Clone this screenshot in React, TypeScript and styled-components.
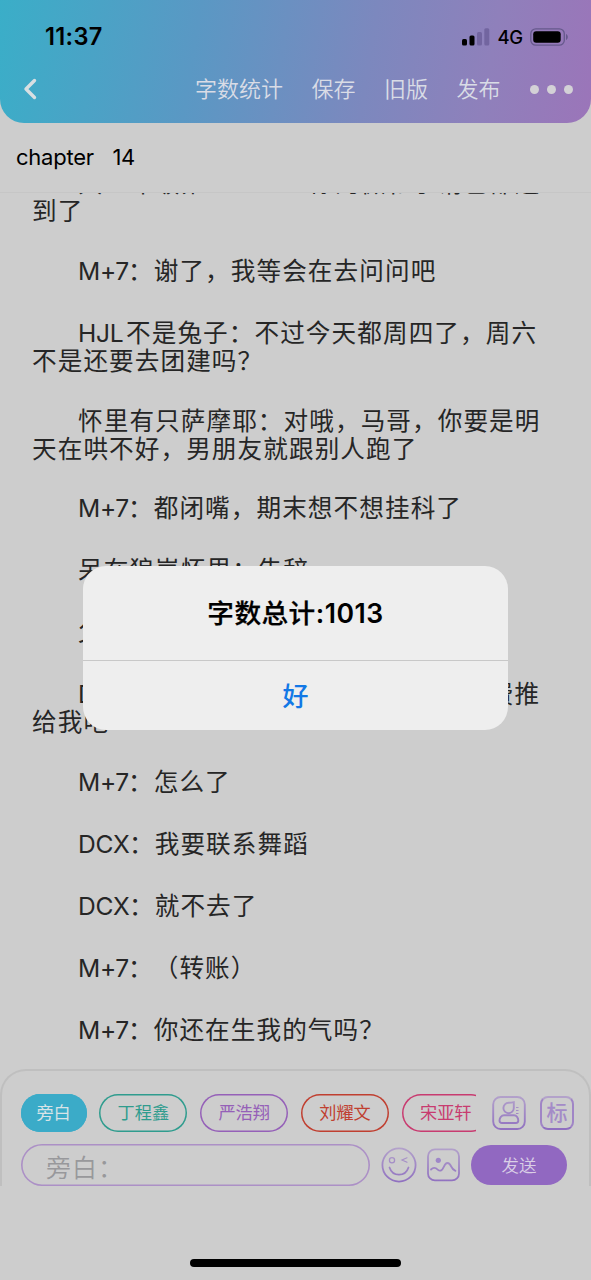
import React from "react";
import styled, { createGlobalStyle, css } from "styled-components";

const Global = createGlobalStyle`
  * { box-sizing: border-box; }
  html, body { margin: 0; padding: 0; background: #cdcdcd; }
  body { font-family: Inter, "Noto Sans CJK SC", sans-serif; color: #000; }
  button { font: inherit; background: none; border: 0; padding: 0; margin: 0; }
`;

const Screen = styled.div`
  position: relative;
  width: 591px;
  height: 1280px;
  overflow: hidden;
  display: flex;
  flex-direction: column;
  background: #cdcdcd;
`;

const Header = styled.header`
  flex: none;
  height: 123px;
  border-radius: 0 0 24px 24px;
  background: linear-gradient(99deg, #3aaec8 0%, #5a98c4 33%, #7c88be 62%, #8f80bb 82%, #9b75b9 100%);
`;

const StatusBar = styled.div`
  height: 62px;
  padding: 11px 22px 0 45px;
  display: flex;
  align-items: center;
`;

const Clock = styled.span`
  flex: 1;
  font-size: 23.6px;
  font-weight: 600;
  letter-spacing: 0.3px;
`;

const Network = styled.span`
  margin: 0 7px 0 7px;
  font-size: 18.5px;
  font-weight: 500;
  letter-spacing: -0.2px;
`;

const Nav = styled.nav`
  height: 54px;
  padding: 0 18px 0 22px;
  display: flex;
  align-items: center;
  gap: 28.5px;
`;

const BackButton = styled.button`
  display: flex;
  margin-right: auto;
`;

const NavItem = styled.button`
  color: #d9dce6;
  font-size: 22px;
  font-weight: 350;
  line-height: 30px;
`;

const Dots = styled.div`
  display: flex;
  gap: 8px;
  margin-left: 1px;
  i {
    width: 9px;
    height: 9px;
    border-radius: 50%;
    background: #d3d1d6;
  }
`;

const ChapterTitle = styled.h1`
  flex: none;
  margin: 0;
  height: 69px;
  padding-left: 16px;
  font-size: 22px;
  font-weight: 400;
  line-height: 69px;
  white-space: pre;
  letter-spacing: -0.25px;
  word-spacing: 3.4px;
`;

const Story = styled.main`
  flex: none;
  height: 877px;
  border-top: 1px solid #c6c6c6;
  padding-left: 32px;
  overflow: hidden;
  color: #262626;
`;

const Scrolled = styled.div`
  margin-top: -24px;
`;

const Paragraph = styled.p<{ $double?: boolean }>`
  margin: 0;
  height: ${(p) => (p.$double ? 87.8 : 62)}px;
  font-size: 24.6px;
  letter-spacing: 1.1px;
  line-height: 28px;
  white-space: nowrap;
  font-weight: 400;
  text-spacing-trim: space-all;
`;

const FirstLine = styled.span`
  display: flex;
  height: 28px;
  padding-left: 46px;
`;

const NextLine = styled.span`
  display: block;
  height: 28px;
`;

const Latin = styled.span<{ $width: number }>`
  width: ${(p) => p.$width}px;
  letter-spacing: -0.3px;
`;

const Composer = styled.section`
  flex: none;
  height: 117px;
  padding: 23px 14px 0 18.6px;
  border: solid #bfbfbf;
  border-width: 2px 2px 0;
  border-radius: 26px 26px 0 0;
`;

const Row = styled.div`
  display: flex;
  align-items: center;
`;

const Chips = styled.div`
  flex: none;
  display: flex;
  gap: 12.8px;
  width: 455.4px;
  overflow: hidden;
  margin-right: 16.5px;
`;

const Chip = styled.button<{ $color: string; $filled?: boolean }>`
  flex: none;
  width: 88px;
  height: 38px;
  border-radius: 19px;
  box-shadow: inset 0 0 0 1.5px ${(p) => p.$color};
  color: ${(p) => p.$color};
  font-size: 17.2px;
  font-weight: 400;
  line-height: 36px;
  ${(p) =>
    p.$filled &&
    css`
      width: 66px;
      background: ${p.$color};
      color: #d8e3e7;
    `}
`;

const IconButton = styled.button<{ $gap?: number }>`
  flex: none;
  display: flex;
  margin-left: ${(p) => p.$gap ?? 0}px;
`;

const InputRow = styled(Row)`
  margin-top: 12px;
`;

const Field = styled.div`
  width: 349.4px;
  height: 42px;
  padding: 4px 0 0 25.5px;
  box-shadow: inset 0 0 0 1.6px #ac90c6;
  border-radius: 21px;
  color: #98989b;
  font-size: 25px;
  font-weight: 350;
  line-height: 41px;
  overflow: hidden;
  letter-spacing: 1px;
`;

const Send = styled.button`
  width: 96px;
  height: 40px;
  margin-left: 11px;
  border-radius: 20px;
  background: #9168c1;
  color: #dacfe6;
  font-size: 17.5px;
  font-weight: 350;
  line-height: 39px;
`;

const HomeIndicator = styled.div`
  flex: none;
  width: 211px;
  height: 8px;
  margin: 73px auto 0 190px;
  border-radius: 4px;
  background: #000;
`;

const Alert = styled.div`
  position: absolute;
  left: 83px;
  top: 566px;
  width: 425px;
  height: 164px;
  border-radius: 23px;
  background: #eeeeee;
  display: flex;
  flex-direction: column;
  text-align: center;
`;

const AlertTitle = styled.h2`
  margin: 0;
  height: 95px;
  border-bottom: 1px solid #c8c8c8;
  font-size: 26.6px;
  font-weight: 500;
  letter-spacing: 0.5px;
  line-height: 95px;
  -webkit-text-stroke: 0.25px #000;
  span {
    font-weight: 600;
    -webkit-text-stroke: 0;
  }
`;

const AlertAction = styled.button`
  flex: 1;
  padding-bottom: 2px;
  color: #1278e6;
  font-size: 26px;
  font-weight: 500;
`;

type Message = { latin?: string; width?: number; text: string; next?: string };

const messages: Message[] = [
  { text: "大一年级第：　　　你的微和子请已都通", next: "到了" },
  { latin: "M+7", width: 50, text: "：谢了，我等会在去问问吧" },
  { latin: "HJL", width: 48, text: "不是兔子：不过今天都周四了，周六", next: "不是还要去团建吗？" },
  { text: "怀里有只萨摩耶：对哦，马哥，你要是明", next: "天在哄不好，男朋友就跟别人跑了" },
  { latin: "M+7", width: 50, text: "：都闭嘴，期末想不想挂科了" },
  { text: "呆在狼崽怀里：告辞" },
  { text: "父" },
  { latin: "DCX", width: 51, text: "：对了你们谁能把那个老师的免费推", next: "给我吧" },
  { latin: "M+7", width: 50, text: "：怎么了" },
  { latin: "DCX", width: 51, text: "：我要联系舞蹈" },
  { latin: "DCX", width: 51, text: "：就不去了" },
  { latin: "M+7", width: 50, text: "：（转账）" },
  { latin: "M+7", width: 50, text: "：你还在生我的气吗？" },
];

const Gradient = ({ id }: { id: string }) => (
  <linearGradient id={id} x1="0" y1="0" x2="0" y2="36" gradientUnits="userSpaceOnUse">
    <stop offset="0" stopColor="#b4a3cb" />
    <stop offset="1" stopColor="#8f6fc0" />
  </linearGradient>
);

const PersonIcon = () => (
  <svg width="34" height="36" viewBox="0 0 34 36" fill="none" stroke="url(#gp)" strokeWidth="1.9">
    <defs><Gradient id="gp" /></defs>
    <rect x="1.2" y="2" width="31.6" height="32" rx="7.5" />
    <path d="M21.800 7.200v5.800a5.200 5.200 0 1 1-5.200-5.200c2 0 3.500-.2 5.200-.6Z" />
    <path d="M12 20.300h10c2.500 0 4.300 2.600 4.300 5.200 0 1.500-1 2.500-2.500 2.500H10c-1.500 0-2.500-1-2.500-2.500 0-2.600 2-5.200 4.500-5.200Z" />
    <path d="M24 12.500h2.500M24 15.500h2.500M24 18.500h2.500" strokeWidth="1" />
  </svg>
);

const TagFrame = styled.span`
  width: 34px;
  height: 34px;
  border: 2px solid #a085c6;
  border-top-color: #b3a2ca;
  border-bottom-color: #8f6fc0;
  border-radius: 8px;
  color: #a48bc8;
  font-size: 21px;
  font-weight: 500;
  line-height: 29px;
`;

const SmileIcon = () => (
  <svg width="36" height="36" viewBox="0 0 36 36" fill="none" stroke="url(#gs)" strokeWidth="1.800" strokeLinecap="round">
    <defs><Gradient id="gs" /></defs>
    <circle cx="18" cy="18" r="16.600" />
    <circle cx="11" cy="13.200" r="2.600" strokeWidth="1.300" />
    <path d="m26 10.800-5 2.200 5 2.200" strokeWidth="1.200" />
    <path d="M8.500 20.500c1.500 4.500 5.200 7.200 9.500 7.200s8-2.700 9.500-7.200" />
  </svg>
);

const PictureIcon = () => (
  <svg width="33" height="36" viewBox="0 0 33 36" fill="none" stroke="url(#gi)" strokeWidth="1.800" strokeLinecap="round">
    <defs><Gradient id="gi" /></defs>
    <rect x="1" y="2.400" width="31" height="31" rx="7" />
    <circle cx="11.300" cy="13.300" r="2.600" fill="#9f87c8" stroke="none" />
    <path d="M4 22.500c3-3 5-1.500 7 .3 2.200 2 4.200.5 5.800-3 2.200-5 5.200-5 7.400-.3 1 2.200 2.300 3.600 4.300 4.300" />
  </svg>
);

const SignalIcon = () => (
  <svg width="28" height="18" viewBox="0 0 28 18">
    <rect x="0" y="11" width="5" height="6.500" rx="1.500" />
    <rect x="7.500" y="7.500" width="5" height="10" rx="1.500" />
    <g fill="#7265a0">
      <rect x="15" y="4" width="5" height="13.500" rx="1.500" />
      <rect x="22.300" y="0.300" width="5" height="17.200" rx="1.500" />
    </g>
  </svg>
);

const BatteryIcon = () => (
  <svg width="39" height="18" viewBox="0 0 39 18">
    <rect x=".8" y=".8" width="33.500" height="16.400" rx="5" fill="none" stroke="#66598c" strokeWidth="1.300" />
    <rect x="3.200" y="3.200" width="27.500" height="11.600" rx="3" />
    <path d="M36 6v6c2.400-1 2.400-5 0-6Z" fill="#66598c" />
  </svg>
);

export default function App() {
  return (
    <Screen>
      <Global />
      <Header>
        <StatusBar>
          <Clock>11:37</Clock>
          <SignalIcon />
          <Network>4G</Network>
          <BatteryIcon />
        </StatusBar>
        <Nav>
          <BackButton aria-label="返回">
            <svg width="16" height="22" viewBox="0 0 16 22" fill="none" stroke="#d8dfe2" strokeWidth="3.400" strokeLinecap="round" strokeLinejoin="round">
              <path d="M12.500 2.500 4 11l8.500 8.500" />
            </svg>
          </BackButton>
          <NavItem>字数统计</NavItem>
          <NavItem>保存</NavItem>
          <NavItem>旧版</NavItem>
          <NavItem>发布</NavItem>
          <Dots><i /><i /><i /></Dots>
        </Nav>
      </Header>
      <ChapterTitle>chapter  14</ChapterTitle>
      <Story>
        <Scrolled>
          {messages.map((m, i) => (
            <Paragraph key={i} $double={!!m.next}>
              <FirstLine>
                {m.latin && <Latin $width={m.width!}>{m.latin}</Latin>}
                {m.text}
              </FirstLine>
              {m.next && <NextLine>{m.next}</NextLine>}
            </Paragraph>
          ))}
        </Scrolled>
      </Story>
      <Composer>
        <Row>
          <Chips>
            <Chip $color="#3babc8" $filled>旁白</Chip>
            <Chip $color="#2f9c8e">丁程鑫</Chip>
            <Chip $color="#9560b8">严浩翔</Chip>
            <Chip $color="#c03f30">刘耀文</Chip>
            <Chip $color="#c83b70">宋亚轩</Chip>
          </Chips>
          <IconButton aria-label="角色"><PersonIcon /></IconButton>
          <IconButton $gap={13.5}><TagFrame>标</TagFrame></IconButton>
        </Row>
        <InputRow>
          <Field>旁白：</Field>
          <IconButton $gap={11} aria-label="表情"><SmileIcon /></IconButton>
          <IconButton $gap={10} aria-label="图片"><PictureIcon /></IconButton>
          <Send>发送</Send>
        </InputRow>
      </Composer>
      <HomeIndicator />
      <Alert role="dialog">
        <AlertTitle>字数总计<span>:1013</span></AlertTitle>
        <AlertAction>好</AlertAction>
      </Alert>
    </Screen>
  );
}
